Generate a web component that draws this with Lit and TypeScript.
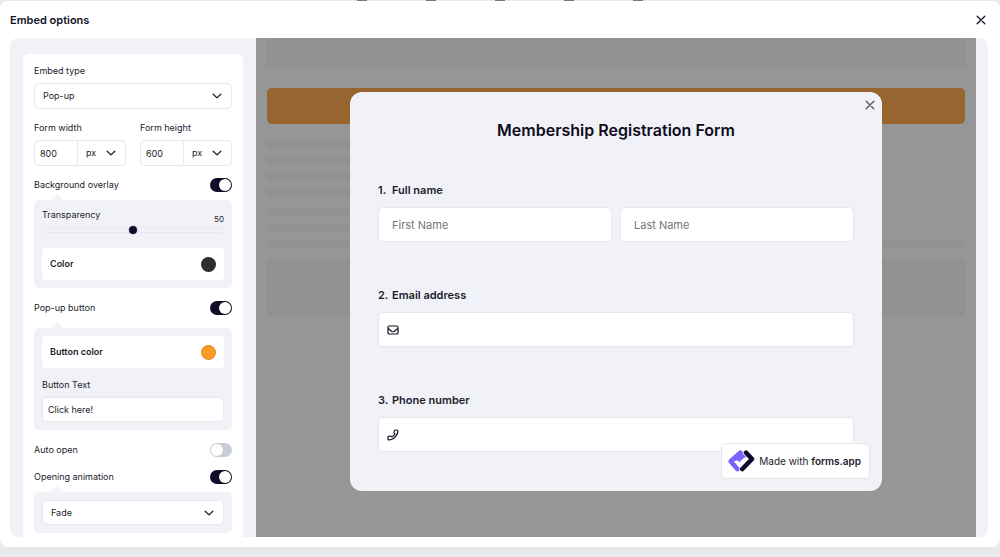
import { LitElement, html, css, svg } from "lit";
import { customElement, property } from "lit/decorators.js";

const chevron = html`<svg class="chevron" viewBox="0 0 10 10" aria-hidden="true">
  <path d="M1.2 3.2 5 6.9 8.8 3.2" fill="none" stroke="#1d1b2e" stroke-width="1.3" stroke-linecap="round" stroke-linejoin="round" />
</svg>`;

const cross = html`<svg viewBox="0 0 10 10" aria-hidden="true">
  <path d="M1.2 1.2 8.8 8.8M8.8 1.2 1.2 8.8" fill="none" stroke="currentColor" stroke-width="1.3" stroke-linecap="round" />
</svg>`;

const mailIcon = svg`<rect x="1" y="2" width="10" height="8" rx="1.3" /><path d="M1.2 4.6 5 7.4q1 .7 2 0L10.8 4.6" />`;

const phoneIcon = svg`<g transform="translate(12 0) scale(-0.5 0.5)" stroke-width="2.4"><path d="M22 16.92v3a2 2 0 0 1-2.18 2 19.79 19.79 0 0 1-8.63-3.07 19.5 19.5 0 0 1-6-6 19.79 19.79 0 0 1-3.07-8.67A2 2 0 0 1 4.11 2h3a2 2 0 0 1 2 1.72c.13.96.36 1.9.7 2.81a2 2 0 0 1-.45 2.11L8.09 9.91a16 16 0 0 0 6 6l1.27-1.27a2 2 0 0 1 2.11-.45c.91.34 1.85.57 2.81.7A2 2 0 0 1 22 16.92z" /></g>`;

const base = css`
  :host,
  * {
    box-sizing: border-box;
  }
  button,
  input,
  select {
    font: inherit;
    color: inherit;
    margin: 0;
  }
  button {
    display: grid;
    place-items: center;
    padding: 0;
    border: 0;
    background: none;
    cursor: pointer;
  }
`;

@customElement("embed-settings")
export class EmbedSettings extends LitElement {
  static styles = [
    base,
    css`
      :host {
        display: block;
        padding: 11px;
        padding-top: 10px;
        background: #fff;
        border-radius: 6px;
        font-size: 9px;
        line-height: 14px;
        color: #1d1b2e;
      }
      .label {
        display: block;
        margin-bottom: 5px;
      }
      .field {
        margin-bottom: 12px;
      }
      .pair {
        display: grid;
        grid-template-columns: 1fr 1fr;
        gap: 14px;
      }
      .select {
        display: grid;
        align-items: center;
      }
      .select > * {
        grid-area: 1 / 1;
      }
      .select select {
        appearance: none;
        width: 100%;
        height: 26px;
        padding: 0 8px;
        border: 1px solid #e6e7ee;
        border-radius: 5px;
        background: #fff;
      }
      .chevron {
        width: 10px;
        height: 10px;
        margin-right: 10px;
        justify-self: end;
        pointer-events: none;
      }
      .size {
        display: grid;
        grid-template-columns: 44px 1fr;
      }
      .text {
        width: 100%;
        height: 26px;
        padding: 0 5px;
        border: 1px solid #e6e7ee;
        border-radius: 5px;
        background: #fff;
      }
      .size .text {
        border-radius: 5px 0 0 5px;
      }
      .size select {
        border-left: 0;
        border-radius: 0 5px 5px 0;
      }
      .row {
        display: flex;
        align-items: center;
        justify-content: space-between;
        margin-bottom: 13px;
      }
      .row.tight {
        margin-bottom: 8px;
      }
      .toggle {
        appearance: none;
        display: flex;
        width: 22px;
        height: 14px;
        padding: 1px;
        border-radius: 7px;
        background: #c8ccd6;
      }
      .toggle::before {
        content: "";
        width: 12px;
        height: 12px;
        border-radius: 50%;
        background: #fff;
      }
      .toggle:checked {
        justify-content: flex-end;
        background: #100c2a;
      }
      .panel {
        position: relative;
        margin-bottom: 13px;
        padding: 8px;
        border-radius: 5px;
        background: #f1f2f8;
      }
      .panel::before {
        content: "";
        position: absolute;
        left: 17px;
        top: -6px;
        border: 6px solid transparent;
        border-top: 0;
        border-bottom-color: #f1f2f8;
      }
      .panel .select select,
      .panel .text {
        height: 25px;
      }
      .slider-head {
        display: flex;
        justify-content: space-between;
        height: 17px;
      }
      .value {
        align-self: flex-end;
        font-size: 8px;
        line-height: 12px;
      }
      .slider {
        appearance: none;
        display: block;
        width: 100%;
        height: 9px;
        margin-bottom: 14px;
        background: none;
      }
      .slider::-webkit-slider-runnable-track {
        height: 6px;
        border: 1px solid #e7e8f0;
        border-radius: 3px;
      }
      .slider::-webkit-slider-thumb {
        appearance: none;
        width: 8px;
        height: 8px;
        margin-top: -2px;
        border-radius: 50%;
        background: #100c2a;
        box-shadow: 0 0 0 1px #dcdde8;
      }
      .swatch-row {
        display: flex;
        align-items: center;
        justify-content: space-between;
        height: 32px;
        padding: 0 8px;
        border-radius: 4px;
        background: #fff;
        font-weight: 600;
      }
      .panel .label {
        margin-top: 10px;
      }
      .swatch {
        appearance: none;
        width: 15px;
        height: 15px;
        padding: 0;
        border: 0;
        background: none;
      }
      .swatch::-webkit-color-swatch-wrapper {
        padding: 0;
      }
      .swatch::-webkit-color-swatch {
        border: 1px solid rgb(0 0 0 / 8%);
        border-radius: 50%;
      }
    `,
  ];

  private size(id: string, label: string, value: string) {
    return html`<div class="field">
      <label class="label" for=${id}>${label}</label>
      <div class="size">
        <input class="text" id=${id} type="text" inputmode="numeric" .value=${value} />
        <div class="select">
          <select aria-label="${label} unit"><option>px</option></select>
          ${chevron}
        </div>
      </div>
    </div>`;
  }

  private toggle(id: string, label: string, on: boolean, tight = false) {
    return html`<div class="row ${tight ? "tight" : ""}">
      <label for=${id}>${label}</label>
      <input class="toggle" id=${id} type="checkbox" role="switch" .checked=${on} />
    </div>`;
  }

  render() {
    return html`
      <div class="field">
        <label class="label" for="type">Embed type</label>
        <div class="select">
          <select id="type"><option>Pop-up</option></select>
          ${chevron}
        </div>
      </div>
      <div class="pair">
        ${this.size("width", "Form width", "800")}
        ${this.size("height", "Form height", "600")}
      </div>

      ${this.toggle("overlay", "Background overlay", true, true)}
      <div class="panel">
        <div class="slider-head">
          <label for="transparency">Transparency</label>
          <output class="value" for="transparency">50</output>
        </div>
        <input class="slider" id="transparency" type="range" min="0" max="100" value="50" />
        <div class="swatch-row">
          <label for="overlay-color">Color</label>
          <input class="swatch" id="overlay-color" type="color" value="#2e2e2e" />
        </div>
      </div>

      ${this.toggle("popup-button", "Pop-up button", true)}
      <div class="panel">
        <div class="swatch-row">
          <label for="button-color">Button color</label>
          <input class="swatch" id="button-color" type="color" value="#fb9a24" />
        </div>
        <label class="label" for="button-text">Button Text</label>
        <input class="text" id="button-text" type="text" .value=${"Click here!"} />
      </div>

      ${this.toggle("auto-open", "Auto open", false)}
      ${this.toggle("animation", "Opening animation", true, true)}
      <div class="panel">
        <div class="select">
          <select aria-label="Animation"><option>Fade</option></select>
          ${chevron}
        </div>
      </div>
    `;
  }
}

@customElement("form-question")
export class FormQuestion extends LitElement {
  @property({ type: Number }) number = 1;
  @property() label = "";
  @property() icon: "" | "mail" | "phone" = "";
  @property({ type: Array }) placeholders: string[] = [""];

  static styles = [
    base,
    css`
      :host {
        display: block;
        font-size: 11px;
        line-height: 16px;
      }
      .question {
        display: flex;
        margin-bottom: 9px;
        font-weight: 600;
        color: #1d1b2e;
      }
      .number {
        width: 14px;
      }
      .inputs {
        display: flex;
        gap: 8px;
      }
      .box {
        flex: 1;
        display: flex;
        align-items: center;
        min-width: 0;
        height: 35px;
        border: 1px solid #e5e6ee;
        border-radius: 5px;
        background: #fff;
      }
      .icon {
        flex: none;
        width: 12px;
        height: 12px;
        margin-left: 8px;
        fill: none;
        stroke: #14121f;
        stroke-width: 1.2;
        stroke-linejoin: round;
      }
      .input {
        flex: 1;
        min-width: 0;
        height: 100%;
        padding: 0 13px;
        border: 0;
        background: none;
      }
      .input::placeholder {
        color: #757575;
      }
    `,
  ];

  render() {
    return html`
      <label class="question" for="input-0">
        <span class="number">${this.number}.</span><span>${this.label}</span>
      </label>
      <div class="inputs">
        ${this.placeholders.map(
          (text, i) => html`<div class="box">
            ${this.icon
              ? html`<svg class="icon" viewBox="0 0 12 12" aria-hidden="true">
                  ${this.icon === "mail" ? mailIcon : phoneIcon}
                </svg>`
              : ""}
            <input class="input" id="input-${i}" type="text" placeholder=${text} aria-label=${text || this.label} />
          </div>`
        )}
      </div>
    `;
  }
}

@customElement("form-preview")
export class FormPreview extends LitElement {
  static styles = [
    base,
    css`
      :host {
        display: grid;
        overflow: hidden;
        background: #969696;
      }
      .skeleton,
      .popup {
        grid-area: 1 / 1;
      }
      .skeleton {
        padding: 0 11px;
      }
      .block,
      .line {
        background: #8f9192;
      }
      .block {
        height: 57px;
        border-radius: 5px;
      }
      .block.hero {
        height: 29px;
        margin-bottom: 21px;
        border-radius: 0 0 4px 4px;
      }
      .cta {
        height: 36px;
        margin-bottom: 17px;
        border-radius: 5px;
        background: #97652f;
      }
      .lines {
        display: grid;
        gap: 8px;
        margin-bottom: 11px;
      }
      .line {
        width: 60%;
        height: 8px;
        border-radius: 2px;
      }
      .line.full {
        width: 100%;
      }
      .popup {
        position: relative;
        justify-self: center;
        align-self: start;
        width: calc(100% - 188px);
        margin-top: 54px;
        padding: 28px 28px 39px;
        border-radius: 12px;
        background: #f1f2f8;
      }
      .title {
        margin: 0 0 42px;
        font-size: 16px;
        line-height: 20px;
        font-weight: 600;
        text-align: center;
        color: #0d0b1c;
      }
      .questions {
        display: grid;
        gap: 45px;
      }
      .close {
        position: absolute;
        top: 7px;
        right: 6px;
        width: 12px;
        height: 12px;
        color: #55555f;
      }
      .close svg {
        width: 10px;
        height: 10px;
      }
      .badge {
        position: absolute;
        right: 12px;
        bottom: 12px;
        display: flex;
        align-items: center;
        gap: 4px;
        height: 36px;
        padding: 0 8px 0 5px;
        border: 1px solid #e4e5ec;
        border-radius: 5px;
        background: #fff;
        font-size: 10px;
        color: #1d1b2e;
        text-decoration: none;
        white-space: nowrap;
      }
      .badge b {
        font-weight: 600;
      }
      .logo {
        width: 28px;
        height: 24px;
      }
    `,
  ];

  render() {
    return html`
      <div class="skeleton" aria-hidden="true">
        <div class="block hero"></div>
        <div class="cta"></div>
        <div class="lines">
          ${[0, 1, 2, 3].map(() => html`<div class="line"></div>`)}
        </div>
        <div class="lines">
          ${[0, 1].map(() => html`<div class="line"></div>`)}
          <div class="line full"></div>
        </div>
        <div class="block"></div>
      </div>
      <section class="popup">
        <button class="close" aria-label="Close form">${cross}</button>
        <h2 class="title">Membership Registration Form</h2>
        <div class="questions">
          <form-question .number=${1} label="Full name" .placeholders=${["First Name", "Last Name"]}></form-question>
          <form-question .number=${2} label="Email address" icon="mail"></form-question>
          <form-question .number=${3} label="Phone number" icon="phone"></form-question>
        </div>
        <a class="badge" href="#">
          <svg class="logo" viewBox="0 0 84 72" aria-hidden="true">
            <g stroke-linejoin="round" stroke-linecap="round">
              <path d="M57 11 75 30 46 60" fill="none" stroke="#100c2a" stroke-width="14" />
              <path d="M40 11 11 37 31 60" fill="none" stroke="#7a62fb" stroke-width="14" />
              <path d="M40 11 54 24 38 40 26 30 14 38Z" fill="#7a62fb" stroke="#7a62fb" stroke-width="5" />
              <path d="M27 36 37 46 56 28" fill="none" stroke="#fff" stroke-width="9" stroke-linecap="butt" stroke-linejoin="miter" />
            </g>
          </svg>
          <span>Made with <b>forms.app</b></span>
        </a>
      </section>
    `;
  }
}

@customElement("app-root")
export class AppRoot extends LitElement {
  static styles = [
    base,
    css`
      :host {
        display: flex;
        flex-direction: column;
        height: 100vh;
        padding-bottom: 10px;
        overflow: hidden;
        background: #e9e9eb;
        font-family: Inter, "Liberation Sans", sans-serif;
        color: #14121f;
      }
      /* Sliver of the page toolbar that shows above the dialog */
      .toolbar {
        flex: none;
        display: grid;
        grid-template-columns: repeat(5, 69px);
        place-content: center;
        justify-items: center;
        height: 1px;
      }
      .tool {
        width: 10px;
        height: 1px;
        background: #77777c;
      }
      .dialog {
        flex: 1;
        display: flex;
        flex-direction: column;
        min-height: 0;
        padding: 0 12px 10px 10px;
        border-radius: 8px;
        background: #fff;
      }
      .header {
        display: flex;
        align-items: center;
        justify-content: space-between;
        height: 37px;
        flex: none;
      }
      .heading {
        margin: 0;
        font-size: 11px;
        line-height: 16px;
        font-weight: 600;
      }
      .close {
        width: 14px;
        height: 14px;
      }
      .close svg {
        width: 10px;
        height: 10px;
      }
      .content {
        flex: 1;
        min-height: 0;
        display: grid;
        grid-template-columns: 220px 1fr;
        grid-template-rows: minmax(0, 1fr);
        gap: 13px;
        padding: 0 12px 0 13px;
        border-radius: 8px;
        background: #f1f2f8;
      }
      .sidebar {
        padding-top: 16px;
        overflow-y: auto;
        scrollbar-width: none;
      }
    `,
  ];

  render() {
    return html`
      <div class="toolbar" aria-hidden="true">
        ${[0, 1, 2, 3, 4].map(() => html`<span class="tool"></span>`)}
      </div>
      <main class="dialog">
        <header class="header">
          <h1 class="heading">Embed options</h1>
          <button class="close" aria-label="Close">${cross}</button>
        </header>
        <div class="content">
          <aside class="sidebar"><embed-settings></embed-settings></aside>
          <form-preview></form-preview>
        </div>
      </main>
    `;
  }
}
